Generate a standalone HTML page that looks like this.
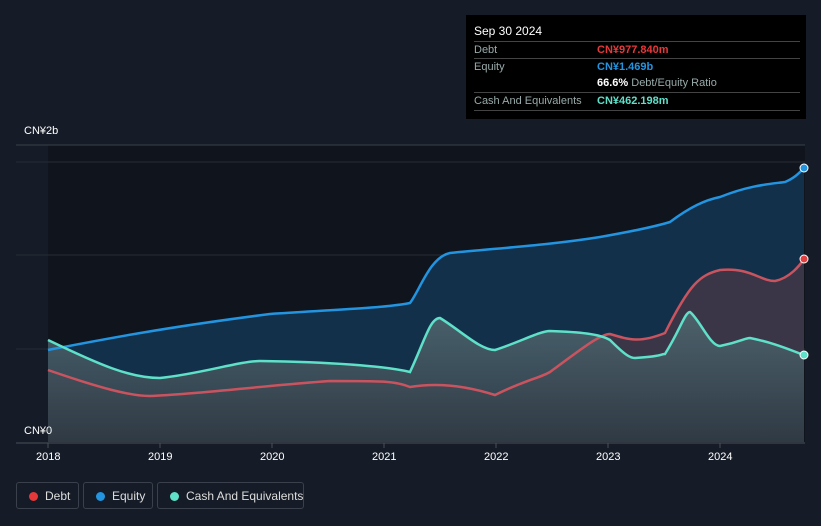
<!DOCTYPE html><html><head><style>
body{margin:0;width:821px;height:526px;background:#161c27;font-family:"Liberation Sans",sans-serif;overflow:hidden;position:relative}
.tt{position:absolute;left:466px;top:15px;width:340px;height:104px;background:#000;color:#fff;font-size:11px}
.tt .h{position:absolute;left:8px;top:9px;font-size:12px}
.row{position:absolute;left:8px;width:326px;border-top:1px solid #444;height:17px;line-height:17px}
.row span{position:absolute;left:123px;font-weight:bold}
.lbl{color:#9aa}
.ax{position:absolute;color:#fff;font-size:11px}
.lg{position:absolute;top:482px;height:27px;border:1px solid #3a414c;border-radius:3px;color:#ddd;font-size:12px;line-height:27px;box-sizing:border-box;white-space:nowrap}
.lg i{position:absolute;left:12px;top:9px;width:9px;height:9px;border-radius:50%}
</style></head><body>
<svg width="821" height="526" style="position:absolute;left:0;top:0">
<defs><linearGradient id="g" x1="0" y1="0" x2="0" y2="1"><stop offset="0" stop-color="#4f6770"/><stop offset="1" stop-color="#2e3a44"/></linearGradient></defs>
<rect x="48" y="145" width="757" height="297" fill="#10141c"/>
<line x1="16" y1="145" x2="805" y2="145" stroke="#3a404a"/>
<line x1="16" y1="162" x2="805" y2="162" stroke="#262c36"/>
<line x1="16" y1="255" x2="805" y2="255" stroke="#262c36"/>
<line x1="16" y1="349" x2="805" y2="349" stroke="#262c36"/>
<path d="M48,350 C100,340 160,328 270,314 C330,310 385,308 410,303 C420,290 430,257 450,253 C500,248 550,245 600,237 C640,230 660,225 670,222 C690,207 705,200 720,197 C750,185 770,184 785,182 C795,178 800,172 804,168 L804,442 L48,442Z" fill="#12304a"/>
<path d="M48,370 C100,388 130,396 150,396 C200,394 270,385 330,381 C385,381 395,381 410,387 C440,382 470,387 495,395 C525,380 540,378 550,372 C580,350 600,334 610,334 C630,340 640,343 665,333 C690,283 700,275 720,270 C750,267 760,281 775,281 C790,278 800,265 804,259 L804,442 L48,442Z" fill="#3f3647" opacity=".9"/>
<path d="M48,340 C100,365 130,378 160,378 C200,374 240,361 260,361 C330,362 385,366 410,372 C425,340 430,318 440,318 C460,330 480,350 495,350 C520,342 540,331 550,331 C580,332 600,334 610,340 C625,355 630,358 635,358 C665,356 660,354 665,354 C680,330 685,312 690,312 C700,320 710,346 720,346 C740,342 745,338 750,338 C775,343 790,350 804,355 L804,442 L48,442Z" fill="url(#g)" opacity=".9"/>
<path d="M48,350 C100,340 160,328 270,314 C330,310 385,308 410,303 C420,290 430,257 450,253 C500,248 550,245 600,237 C640,230 660,225 670,222 C690,207 705,200 720,197 C750,185 770,184 785,182 C795,178 800,172 804,168" fill="none" stroke="#2394e0" stroke-width="2.5"/>
<path d="M48,370 C100,388 130,396 150,396 C200,394 270,385 330,381 C385,381 395,381 410,387 C440,382 470,387 495,395 C525,380 540,378 550,372 C580,350 600,334 610,334 C630,340 640,343 665,333 C690,283 700,275 720,270 C750,267 760,281 775,281 C790,278 800,265 804,259" fill="none" stroke="#c9545f" stroke-width="2.5"/>
<path d="M48,340 C100,365 130,378 160,378 C200,374 240,361 260,361 C330,362 385,366 410,372 C425,340 430,318 440,318 C460,330 480,350 495,350 C520,342 540,331 550,331 C580,332 600,334 610,340 C625,355 630,358 635,358 C665,356 660,354 665,354 C680,330 685,312 690,312 C700,320 710,346 720,346 C740,342 745,338 750,338 C775,343 790,350 804,355" fill="none" stroke="#5fe0c8" stroke-width="2.5"/>
<circle cx="804" cy="168" r="4" fill="#2394e0" stroke="#fff"/>
<circle cx="804" cy="259" r="4" fill="#e04040" stroke="#fff"/>
<circle cx="804" cy="355" r="4" fill="#5fe0c8" stroke="#fff"/>
<line x1="16" y1="443" x2="805" y2="443" stroke="#4a505a"/>
<g stroke="#4a505a"><line x1="48" y1="443" x2="48" y2="448"/><line x1="160" y1="443" x2="160" y2="448"/><line x1="272" y1="443" x2="272" y2="448"/><line x1="384" y1="443" x2="384" y2="448"/><line x1="496" y1="443" x2="496" y2="448"/><line x1="608" y1="443" x2="608" y2="448"/><line x1="720" y1="443" x2="720" y2="448"/></g>
</svg>
<div class="ax" style="left:24px;top:125px">CN¥2b</div>
<div class="ax" style="left:24px;top:425px">CN¥0</div>
<div class="ax" style="left:36px;top:451px">2018</div>
<div class="ax" style="left:148px;top:451px">2019</div>
<div class="ax" style="left:260px;top:451px">2020</div>
<div class="ax" style="left:372px;top:451px">2021</div>
<div class="ax" style="left:484px;top:451px">2022</div>
<div class="ax" style="left:596px;top:451px">2023</div>
<div class="ax" style="left:708px;top:451px">2024</div>
<div class="tt"><div class="h">Sep 30 2024</div>
<div class="row lbl" style="top:26px">Debt<span style="color:#e5383b">CN¥977.840m</span></div>
<div class="row lbl" style="top:43px">Equity<span style="color:#2394e0">CN¥1.469b</span></div>
<div class="row" style="top:60px;border:0"><span style="color:#fff">66.6% <b style="color:#9aa;font-weight:normal">Debt/Equity Ratio</b></span></div>
<div class="row lbl" style="top:77px">Cash And Equivalents<span style="color:#5fe0c8">CN¥462.198m</span></div>
<div class="row" style="top:95px;height:0"></div>
</div>
<div class="lg" style="left:16px;width:63px"><i style="background:#e5383b"></i><span style="position:absolute;left:28px">Debt</span></div>
<div class="lg" style="left:83px;width:70px"><i style="background:#2394e0"></i><span style="position:absolute;left:28px">Equity</span></div>
<div class="lg" style="left:157px;width:147px"><i style="background:#5fe0c8"></i><span style="position:absolute;left:28px">Cash And Equivalents</span></div>
</body></html>
